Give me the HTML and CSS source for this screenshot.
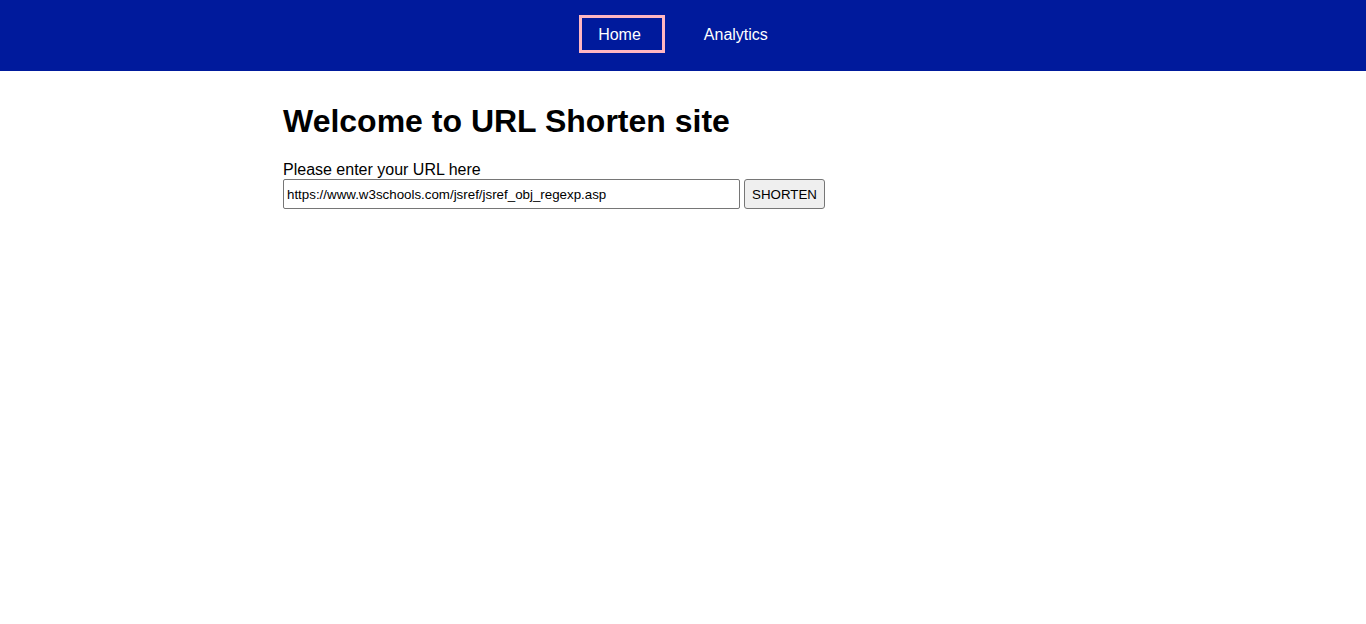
FILE: index.html
```html
<!DOCTYPE html>
<html lang="en">
<head>
<meta charset="utf-8">
<title>URL Shorten</title>
<link rel="stylesheet" href="styles.css">
</head>
<body>
<nav class="topnav">
  <ul class="nav-list">
    <li><a class="nav-link active" href="#">Home</a></li>
    <li><a class="nav-link" href="#">Analytics</a></li>
  </ul>
</nav>
<main class="container">
  <h1 class="title">Welcome to URL Shorten site</h1>
  <form class="shorten-form">
    <label class="url-label" for="url">Please enter your URL here</label>
    <div class="form-row">
      <input class="url-input" id="url" type="text" value="https://www.w3schools.com/jsref/jsref_obj_regexp.asp">
      <button class="shorten-btn" type="button">SHORTEN</button>
    </div>
  </form>
</main>
</body>
</html>
```
FILE: styles.css
```css
html, body {
  margin: 0;
  padding: 0;
  background: #fff;
  font-family: "Liberation Sans", Arial, sans-serif;
  color: #000;
}
.topnav {
  height: 71px;
  box-sizing: border-box;
  padding-top: 15px;
  background: #001a9c;
  display: flex;
  align-items: flex-start;
  justify-content: center;
}
.nav-list {
  list-style: none;
  margin: 0 0 0 5px;
  padding: 0;
  display: flex;
  gap: 20px;
}
.nav-link {
  display: block;
  padding: 9px 21px 7px 16px;
  border: 3px solid transparent;
  color: #fff;
  text-decoration: none;
  font-size: 16px;
  line-height: 16px;
}
.nav-link.active {
  border-color: #ffb6c1;
}
.container {
  width: 800px;
  margin: 0 auto;
  padding-top: 11px;
}
.title {
  font-size: 32px;
  font-weight: bold;
  margin: 21px 0 21px;
  line-height: 37px;
}
.url-label {
  display: block;
  font-size: 16px;
  line-height: 18px;
}
.form-row {
  display: flex;
  gap: 4px;
}
.url-input {
  width: 457px;
  height: 30px;
  box-sizing: border-box;
  border: 1px solid #767676;
  border-radius: 2px;
  padding: 1px 3px;
  font-family: "Liberation Sans", Arial, sans-serif;
  font-size: 13.33px;
  color: #000;
  margin: 0;
}
.shorten-btn {
  width: 81px;
  height: 30px;
  box-sizing: border-box;
  border: 1px solid #767676;
  border-radius: 3px;
  background: #efefef;
  font-family: "Liberation Sans", Arial, sans-serif;
  font-size: 13.33px;
  color: #000;
  padding: 0;
  margin: 0;
}
```
